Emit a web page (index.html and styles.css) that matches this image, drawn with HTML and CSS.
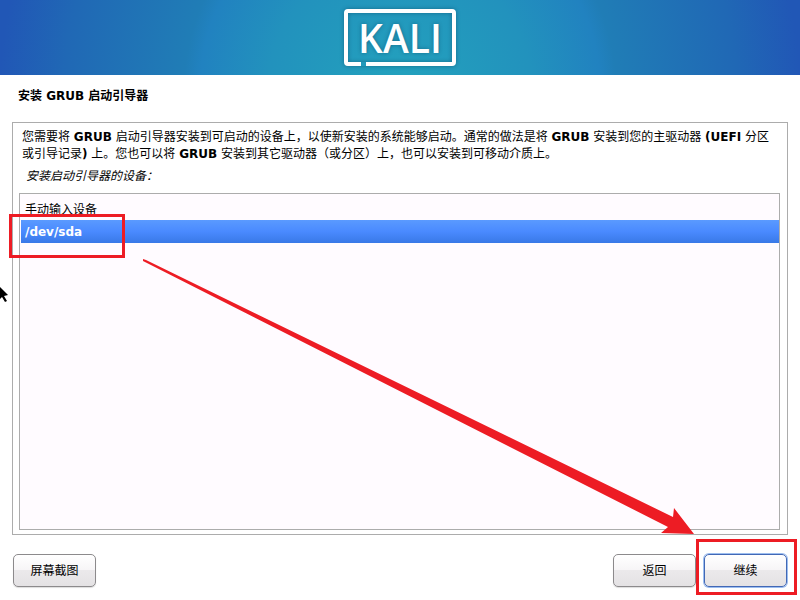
FILE: index.html
```html
<!DOCTYPE html>
<html lang="zh-CN">
<head>
    <meta charset="UTF-8">
    <meta name="viewport" content="width=device-width, initial-scale=1.0">
    <title>安装 GRUB 启动引导器</title>
    <link rel="stylesheet" href="styles.css">
</head>
<body>

<header>
    <div class="logo">KALI</div>
</header>

<main>
    <h1>安装 GRUB 启动引导器</h1>

    <form class="installer" id="grub-form">
        <section class="panel">
            <p class="description">您需要将 <b>GRUB</b> 启动引导器安装到可启动的设备上，以使新安装的系统能够启动。通常的做法是将 <b>GRUB</b> 安装到您的主驱动器 <b>(UEFI</b> 分区或引导记录<b>)</b> 上。您也可以将 <b>GRUB</b> 安装到其它驱动器（或分区）上，也可以安装到可移动介质上。</p>
            <label class="question" for="device">安装启动引导器的设备：</label>
            <select class="devices" id="device" size="2">
                <option>手动输入设备</option>
                <option selected>/dev/sda</option>
            </select>
            <span class="mark mark-device"></span>
        </section>

        <div class="buttons">
            <button type="button">屏幕截图</button>
            <div class="actions">
                <button type="button">返回</button>
                <div class="next">
                    <button type="submit" class="default">继续</button>
                    <span class="mark mark-next"></span>
                </div>
            </div>
        </div>
    </form>
</main>

<!-- Flecha desde el dispositivo hasta el botón -->
<svg class="arrow" viewBox="0 0 800 600" preserveAspectRatio="none" aria-hidden="true">
    <path fill="#ed1c24" d="M143 259 L146 260 L673 517 L674 508 L694 534 L661 533 L668 527 L143 261 Z"/>
</svg>

<!-- Puntero del ratón -->
<svg class="pointer" width="9" height="17" viewBox="0 0 9 17" aria-hidden="true">
    <path d="M0 1 L8 9 L4 10 L7 15 L5 16 L2 11 L0 13 Z"/>
</svg>

</body>
</html>
```

FILE: styles.css
```css
* {
    box-sizing: border-box;
}

body {
    display: flex;
    flex-direction: column;
    position: relative;
    min-height: 100vh;
    margin: 0;
    background-color: white;
    color: black;
    font-family: "DejaVu Sans", "Noto Sans CJK SC", sans-serif;
    font-size: 12px;
    line-height: 17px;
}

header {
    display: flex;
    justify-content: center;
    padding: 9px;
    background: radial-gradient(circle farthest-side at 50% 120%, #23a2bd 0%, #2292bd 33%, #2182c0 50%, #207db6 54%, #2068b5 84%, #2157b6 100%);
}

.logo {
    position: relative;
    width: 112px;
    height: 57px;
    border: 4px solid white;
    border-radius: 4px;
    color: white;
    font-family: "Open Sans", sans-serif;
    font-size: 39px;
    font-weight: 600;
    line-height: 50px;
    text-align: center;
    box-shadow: 0 0 4px rgba(0, 40, 70, 0.4), inset 0 0 4px rgba(0, 40, 70, 0.4);
    text-shadow: 0 0 4px rgba(0, 40, 70, 0.4);
}

/* corte en el borde inferior */
.logo::after {
    content: "";
    position: absolute;
    left: 13px;
    bottom: -4px;
    width: 5px;
    height: 4px;
    background-color: #2299bb;
}

main {
    display: flex;
    flex-direction: column;
    flex: 1;
    padding: 13px 12px;
}

h1 {
    margin: 0 6px 17px;
    font-size: 12px;
    line-height: 17px;
}

.installer {
    display: flex;
    flex-direction: column;
    flex: 1;
}

.panel {
    display: flex;
    flex-direction: column;
    flex: 1;
    position: relative;
    padding: 6px 7px 4px 6px;
    border: 1px solid #acacac;
}

.description {
    margin: 0 6px 5px 3px;
}

.question {
    margin: 0 7px 8px;
    font-style: italic;
}

.devices {
    flex: 1;
    width: 100%;
    padding: 3px 0 0 1px;
    border: 1px solid #acacac;
    border-radius: 0;
    outline: none;
    background-color: #fffbff;
    color: black;
    font: inherit;
    overflow: hidden;
}

.devices option {
    display: flex;
    align-items: center;
    height: 23px;
    min-height: 23px;
    padding: 0 4px;
}

.devices option:checked {
    background: linear-gradient(#5a9aff, #4a8aff 50%, #3979e7);
    color: white;
    font-weight: bold;
}

.buttons {
    display: flex;
    justify-content: space-between;
    margin: 19px 1px 0;
}

.actions {
    display: flex;
    gap: 8px;
}

button {
    width: 83px;
    height: 33px;
    padding: 2px 0 0;
    border: 1px solid #8c8a8c;
    border-radius: 5px;
    background: linear-gradient(white, #f7f5f7 48%, #ebe9eb 50%, #e4e2e4);
    color: black;
    font: inherit;
    box-shadow: 0 1px 1px #dddddd;
    cursor: pointer;
}

button.default {
    border-color: #4268b5;
    box-shadow: 0 0 0 1px #9cbef0;
}

.next {
    position: relative;
}

.mark {
    position: absolute;
    border: 3px solid #ed1c24;
    pointer-events: none;
}

.mark-device {
    top: 91px;
    left: -4px;
    width: 116px;
    height: 44px;
}

.mark-next {
    top: -15px;
    right: -10px;
    bottom: -8px;
    left: -8px;
}

.arrow {
    position: absolute;
    top: 0;
    left: 0;
    width: 100%;
    height: 100%;
    pointer-events: none;
}

.pointer {
    position: absolute;
    top: 286px;
    left: 0;
}
```
